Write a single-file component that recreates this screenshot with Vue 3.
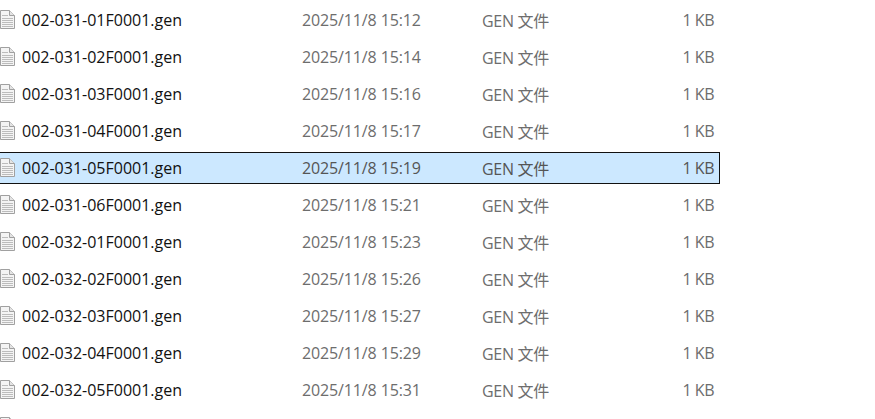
<template>
  <div class="list">
    <div
      v-for="(file, i) in files"
      :key="i"
      class="row"
      :class="{ selected: file.name === selectedName }"
    >
      <svg class="file-icon" width="15" height="19" viewBox="0 0 15 19">
        <path d="M0.5 0.5H9.5L14.5 5.5V18.5H0.5Z" fill="#f4f4f4" stroke="#a0a0a0" />
        <path d="M9.5 0.5V5.5H14.5" fill="#e4e4e4" stroke="#a0a0a0" />
        <path d="M2 5.5H8M2 8.5H13M2 10.5H13M2 12.5H13M2 14.5H13M2 16.5H13" stroke="#bcbcbc" fill="none" />
      </svg>
      <template v-if="file.name">
        <span class="name">{{ file.name }}</span>
        <span class="date">{{ file.date }}</span>
        <span class="type">GEN 文件</span>
        <span class="size">1 KB</span>
      </template>
    </div>
  </div>
</template>

<script setup>
const selectedName = '002-031-05F0001.gen'

// the last row only peeks in at the bottom edge, its icon is all that shows
const files = [
  { name: '002-031-01F0001.gen', date: '2025/11/8 15:12' },
  { name: '002-031-02F0001.gen', date: '2025/11/8 15:14' },
  { name: '002-031-03F0001.gen', date: '2025/11/8 15:16' },
  { name: '002-031-04F0001.gen', date: '2025/11/8 15:17' },
  { name: '002-031-05F0001.gen', date: '2025/11/8 15:19' },
  { name: '002-031-06F0001.gen', date: '2025/11/8 15:21' },
  { name: '002-032-01F0001.gen', date: '2025/11/8 15:23' },
  { name: '002-032-02F0001.gen', date: '2025/11/8 15:26' },
  { name: '002-032-03F0001.gen', date: '2025/11/8 15:27' },
  { name: '002-032-04F0001.gen', date: '2025/11/8 15:29' },
  { name: '002-032-05F0001.gen', date: '2025/11/8 15:31' },
  {}
]
</script>

<style scoped>
.list {
  display: flex; flex-direction: column; gap: 5px;
  width: 720px; height: 419px;
  padding-top: 4px; box-sizing: border-box;
  overflow: hidden;
  font-family: "Open Sans", "Noto Sans CJK SC", sans-serif;
  font-size: 16px;
}

.row {
  flex: none;
  display: grid;
  grid-template-columns: 22px 280px 180px 1fr 60px;
  align-items: center;
  height: 32px; box-sizing: border-box;
  padding-right: 5px;
  border: 1px solid transparent; border-left: 0;
  color: #6d6d6d;
}

.row.selected {
  background: #cce8ff;
  border-color: #111;
  color: #555;
}

.file-icon { margin-top: -1px; }
.name { color: #111; }
.date { letter-spacing: -.13px; }
.type { letter-spacing: -.3px; }
.size { text-align: right; letter-spacing: -.5px; }
</style>
